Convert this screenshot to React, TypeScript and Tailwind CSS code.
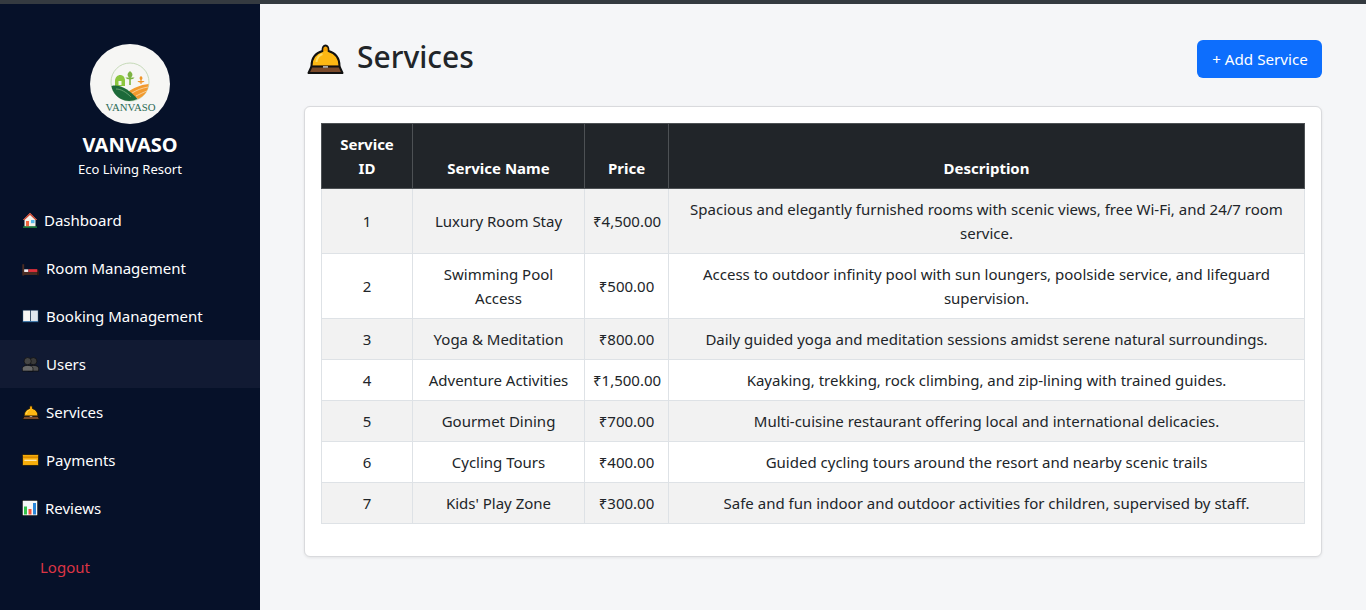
import React from "react";

const menu = [
  { label: "Dashboard", icon: <HouseIcon />, gap: "ml-[6px]" },
  { label: "Room Management", icon: <BedIcon />, gap: "ml-[7px]" },
  { label: "Booking Management", icon: <BookIcon />, gap: "ml-[7px]" },
  { label: "Users", icon: <UsersIcon />, gap: "ml-[7px]", active: true },
  { label: "Services", icon: <BellIcon className="h-[15px] w-[18px]" />, gap: "ml-[6px]" },
  { label: "Payments", icon: <CardIcon />, gap: "ml-[7px]" },
  { label: "Reviews", icon: <ChartIcon />, gap: "ml-[7px]" },
];

const services = [
  { id: 1, name: "Luxury Room Stay", price: "₹4,500.00", description: "Spacious and elegantly furnished rooms with scenic views, free Wi-Fi, and 24/7 room service." },
  { id: 2, name: "Swimming Pool Access", price: "₹500.00", description: "Access to outdoor infinity pool with sun loungers, poolside service, and lifeguard supervision." },
  { id: 3, name: "Yoga & Meditation", price: "₹800.00", description: "Daily guided yoga and meditation sessions amidst serene natural surroundings." },
  { id: 4, name: "Adventure Activities", price: "₹1,500.00", description: "Kayaking, trekking, rock climbing, and zip-lining with trained guides." },
  { id: 5, name: "Gourmet Dining", price: "₹700.00", description: "Multi-cuisine restaurant offering local and international delicacies." },
  { id: 6, name: "Cycling Tours", price: "₹400.00", description: "Guided cycling tours around the resort and nearby scenic trails" },
  { id: 7, name: "Kids' Play Zone", price: "₹300.00", description: "Safe and fun indoor and outdoor activities for children, supervised by staff." },
];

function HouseIcon() {
  return (
    <svg viewBox="0 0 16 16" className="h-[16px] w-[16px] shrink-0">
      <path d="M8 1 L15 8 H13.5 V14.5 H2.5 V8 H1 Z" fill="#f5f1ea" />
      <path d="M8 0.8 L15.2 8 H13.4 L8 3 L2.6 8 H0.8 Z" fill="#c8452f" />
      <rect x="4" y="9" width="3" height="5.5" fill="#f0643c" />
      <rect x="9" y="8" width="3.5" height="3.2" fill="#58b8e8" />
      <rect x="1" y="14.4" width="14" height="1.4" fill="#1f8a3d" />
    </svg>
  );
}

function BedIcon() {
  return (
    <svg viewBox="0 0 18 16" className="h-[16px] w-[17px] shrink-0">
      <rect x="0.3" y="4" width="2" height="12" fill="#4a2c22" />
      <rect x="1" y="12" width="16.5" height="3.4" fill="#4a2c22" />
      <rect x="16" y="10" width="1.8" height="5.8" fill="#2a1a14" />
      <rect x="2.3" y="9.4" width="4.5" height="2.8" fill="#f3eeee" />
      <rect x="6.8" y="9.2" width="9.4" height="3" fill="#e0303a" />
    </svg>
  );
}

function BookIcon() {
  return (
    <svg viewBox="0 0 18 16" className="h-[16px] w-[17px] shrink-0">
      <rect x="0.2" y="1.5" width="17.6" height="13.5" fill="#0f2a48" />
      <rect x="1.2" y="2.2" width="7.4" height="11.3" fill="#f7f7f5" />
      <rect x="9.4" y="2.2" width="7.4" height="11.3" fill="#dfe7ee" />
      <rect x="1" y="13.5" width="16" height="0.8" fill="#4a8cc4" />
    </svg>
  );
}

function UsersIcon() {
  return (
    <svg viewBox="0 0 18 16" className="h-[16px] w-[17px] shrink-0">
      <circle cx="12" cy="5" r="3.8" fill="#3a3a3a" stroke="#0a0a0a" strokeWidth="0.7" />
      <path d="M6.5 15.5 V12.5 C6.5 10.5 9 9.5 12 9.5 C15 9.5 17.6 10.5 17.6 12.5 V15.5 Z" fill="#525252" stroke="#0a0a0a" strokeWidth="0.7" />
      <circle cx="6" cy="5" r="3.8" fill="#454545" stroke="#0a0a0a" strokeWidth="0.7" />
      <path d="M0.4 15.5 V12.5 C0.4 10.5 3 9.5 6 9.5 C9 9.5 11.6 10.5 11.6 12.5 V15.5 Z" fill="#686868" stroke="#0a0a0a" strokeWidth="0.7" />
    </svg>
  );
}

function BellIcon({ className }: { className: string }) {
  return (
    <svg viewBox="0 0 36 30" className={`${className} shrink-0`}>
      <path d="M4 22 C4 14 8 9 15 7 C15 5.5 15 1.5 18 1.5 C21 1.5 21 5.5 21 7 C28 9 32 14 32 22 Z" fill="#fdb813" stroke="#111" strokeWidth="2" strokeLinejoin="round" />
      <path d="M5 21 H31 V23 H5 Z" fill="#e8960c" />
      <path d="M9 18 C9.5 14 12 11 15 10" fill="none" stroke="#ffdc62" strokeWidth="2" />
      <path d="M16 3.5 H20 V7 H16 Z" fill="#f59f00" />
      <path d="M4 22.5 H32 L35 29 H1 Z" fill="#7a4a2a" stroke="#111" strokeWidth="2" strokeLinejoin="round" />
      <rect x="15.5" y="22" width="5" height="1.8" fill="#a8a8a8" />
    </svg>
  );
}

function CardIcon() {
  return (
    <svg viewBox="0 0 18 16" className="h-[16px] w-[17px] shrink-0">
      <rect x="0.5" y="2.2" width="17" height="11.6" rx="0.8" fill="#f7ae0a" stroke="#111" strokeWidth="0.8" />
      <rect x="1" y="4.2" width="16" height="1.6" fill="#d78a00" />
      <rect x="2.5" y="7.6" width="13" height="1.4" fill="#ffe9b0" />
    </svg>
  );
}

function ChartIcon() {
  return (
    <svg viewBox="0 0 16 16" className="h-[16px] w-[16px] shrink-0">
      <rect x="0.3" y="0.3" width="15.4" height="15.4" fill="#f7f7f7" stroke="#0a0a0a" strokeWidth="0.6" />
      <rect x="2" y="6.5" width="3" height="8" fill="#34c24a" />
      <rect x="6.5" y="9" width="3" height="5.5" fill="#f4523a" />
      <rect x="11" y="3" width="3" height="11.5" fill="#2a86d8" />
    </svg>
  );
}

function Logo() {
  return (
    <div className="flex h-[80px] w-[80px] items-center justify-center rounded-full bg-[#f6f6f4]">
      <svg viewBox="0 0 80 80" className="h-[80px] w-[80px]">
        <circle cx="40" cy="38" r="19" fill="none" stroke="#b9d2a8" strokeWidth="0.8" />
        {/* barn */}
        <path d="M25 37 C25 33 28 31 30 31 C33 31 35 33 35 37 V42 H25 Z" fill="#8cc63f" />
        <rect x="28.5" y="37" width="3" height="4" fill="#f6f6f4" />
        {/* tree */}
        <rect x="39.2" y="33" width="1.6" height="8" fill="#7cb342" />
        <path d="M40 34 C36.5 32 37 29.5 40 27 C43 29.5 43.5 32 40 34 Z" fill="#7cb342" />
        <path d="M35.5 33.5 H44.5 C43.5 36 36.5 36 35.5 33.5 Z" fill="#7cb342" />
        {/* orange plant */}
        <rect x="50.4" y="35" width="1.2" height="5" fill="#f0962a" />
        <path d="M51 36 C49 35 49 33.5 51 32 C53 33.5 53 35 51 36 Z" fill="#f0962a" />
        <path d="M47.5 37 H54.5 C53.5 39 48.5 39 47.5 37 Z" fill="#f0962a" />
        {/* fields */}
        <path d="M38 48 C43 44 50 41 58.5 40 C58.5 46 55 52 48 55 C45 53 41 50 38 48 Z" fill="#f29a2e" />
        <path d="M42 49 C47 46 52 44 58 43 M46 52 C50 50 54 48 57 47" fill="none" stroke="#f9dcae" strokeWidth="0.8" />
        {/* leaf */}
        <path d="M21.5 42 C31 40 39 46 47.5 55 C42 57.5 36 57.5 31 55 C26 52.5 22.5 48 21.5 42 Z" fill="#1d6a3a" />
        <path d="M26 45 C31 45 36 48 41 53" fill="none" stroke="#8fc08e" strokeWidth="0.6" />
        <text x="40.5" y="66.5" textAnchor="middle" fontFamily="Liberation Serif, serif" fontSize="10.8" fill="#2c6b57">VANVASO</text>
      </svg>
    </div>
  );
}

export default function App() {
  return (
    <div className="flex h-[610px] w-[1366px] flex-col overflow-hidden bg-[#f5f6f8] font-['Noto_Sans',sans-serif] text-[15px] text-[#212529]">
      <div className="h-[4px] shrink-0 bg-[#343a40]"></div>
      <div className="flex min-h-0 flex-1">
        {/* Sidebar */}
        <aside className="flex w-[260px] shrink-0 flex-col bg-[#061129] pt-[40px] text-white">
          <div className="flex flex-col items-center">
            <Logo />
            <h4 className="mt-[9px] text-[20px] leading-[24px] font-bold">VANVASO</h4>
            <p className="mt-[2px] text-[13px] leading-[21px]">Eco Living Resort</p>
          </div>
          <nav className="mt-[16px] flex flex-col">
            {menu.map((item) => (
              <a
                key={item.label}
                className={`flex h-[48px] items-center pl-[22px] ${item.active ? "bg-[#111a33]" : ""}`}
              >
                {item.icon}
                <span className={item.gap}>{item.label}</span>
              </a>
            ))}
          </nav>
          <a className="mt-[11px] flex h-[48px] items-center pl-[40px] text-[#dc3545]">Logout</a>
        </aside>

        {/* Main */}
        <main className="min-w-0 flex-1 px-[44px] pt-[36px]">
          <div className="flex h-[38px] items-center justify-between">
            <h1 className="flex items-center text-[30px] font-medium">
              <BellIcon className="ml-[3px] h-[30px] w-[37px]" />
              <span className="relative top-[-3px] ml-[13px]">Services</span>
            </h1>
            <button className="h-[38px] w-[125px] rounded-[6px] bg-[#0d6efd] pt-[1px] pl-[1px] text-[15.2px] text-white">+ Add Service</button>
          </div>

          <div className="mt-[28px] rounded-[6px] border border-[#d9dadd] bg-white p-[16px] pb-[32px] shadow-[0_1px_3px_rgba(0,0,0,0.08)]">
            <table className="w-full table-fixed border-collapse text-center">
              <colgroup>
                <col className="w-[91px]" />
                <col className="w-[172px]" />
                <col className="w-[84px]" />
                <col />
              </colgroup>
              <thead className="bg-[#212529] text-white">
                <tr className="h-[65px]">
                  {["Service ID", "Service Name", "Price", "Description"].map((h) => (
                    <th key={h} className="border border-[#4d5154] px-[8px] pt-[7px] pb-[8px] align-bottom leading-[24px] font-bold">
                      {h}
                    </th>
                  ))}
                </tr>
              </thead>
              <tbody>
                {services.map((s, i) => (
                  <tr key={s.id} className={`h-[41px] ${i % 2 === 0 ? "bg-[#f2f2f2]" : "bg-white"}`}>
                    <td className="border border-[#dee2e6] px-[8px] py-[8px] leading-[24px]">{s.id}</td>
                    <td className="border border-[#dee2e6] px-[8px] py-[8px] leading-[24px]">{s.name}</td>
                    <td className="border border-[#dee2e6] px-[8px] py-[8px] leading-[24px]">{s.price}</td>
                    <td className="border border-[#dee2e6] px-[8px] py-[8px] leading-[24px]">{s.description}</td>
                  </tr>
                ))}
              </tbody>
            </table>
          </div>
        </main>
      </div>
    </div>
  );
}
